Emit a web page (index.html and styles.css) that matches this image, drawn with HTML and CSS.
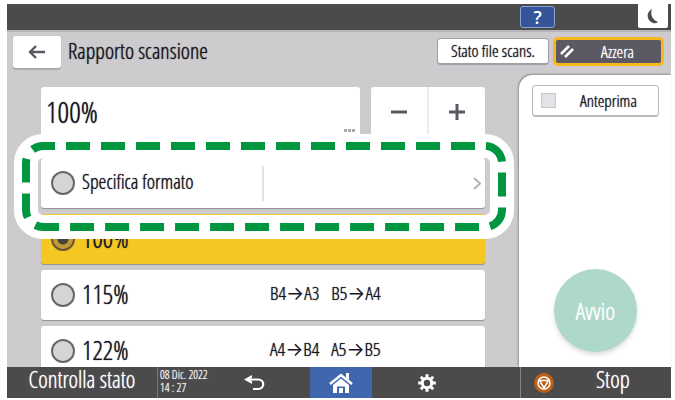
FILE: index.html
```html
<!DOCTYPE html>
<html lang="it">
<head>
<meta charset="utf-8">
<title>Rapporto scansione</title>
<link rel="stylesheet" href="styles.css">
</head>
<body>
<div class="screen">
  <div class="topbar">
    <button class="help" aria-label="Guida">?</button>
    <button class="sleep" aria-label="Risparmio energia"><svg width="12" height="16" viewBox="0 0 12 16"><path d="M5 1C-1 4-1 12 6 15q3 1 5-1C5 12 3 6 5 1z" fill="#4b4b4c"/></svg></button>
  </div>
  <header class="header">
    <button class="back" aria-label="Indietro"><svg width="18" height="14" viewBox="0 0 18 14"><path d="M17 7H2M8 1L2 7l6 6" fill="none" stroke="#5b5963" stroke-width="2.400"/></svg></button>
    <h1 class="title">Rapporto scansione</h1>
    <button class="status-button">Stato file scans.</button>
    <button class="reset-button"><svg width="14" height="13" viewBox="0 0 14 13"><path d="M1 9L9 1M5 12l8-8" stroke="#fff" stroke-width="2.600"/></svg><span>Azzera</span></button>
  </header>
  <div class="content">
    <main class="main">
      <div class="entry-row">
        <div class="entry"><input class="value" type="text" value="100%" aria-label="Rapporto"><svg class="dots" width="11" height="3" viewBox="0 0 11 3"><path d="M0 0h3v3H0zM4 0h3v3H4zM8 0h3v3H8z" fill="#aaa9ad"/></svg></div>
        <div class="stepper">
          <button aria-label="Riduci"><svg width="16" height="16" viewBox="0 0 16 16"><path d="M0 8h16" stroke="#5b5963" stroke-width="3"/></svg></button>
          <button aria-label="Aumenta"><svg width="16" height="16" viewBox="0 0 16 16"><path d="M0 8h16M8 0v16" stroke="#5b5963" stroke-width="3"/></svg></button>
        </div>
      </div>
      <div class="options">
        <div class="featured">
          <label class="option"><input type="radio" name="ratio"><span class="format">Specifica formato</span><span class="format-value"><svg width="8" height="13" viewBox="0 0 8 13"><path d="M1 1l6 5.500-6 5.500" fill="none" stroke="#b5b4b9" stroke-width="2"/></svg></span></label>
          <svg class="highlight" aria-hidden="true"><rect class="halo" x="12" y="12" rx="17"/><rect class="dashes" x="12" y="12" rx="17"/></svg>
        </div>
        <label class="option selected"><input type="radio" name="ratio" checked><span class="ratio">100%</span></label>
        <label class="option"><input type="radio" name="ratio"><span class="ratio">115%</span><span class="sizes"><span>B4<span class="arrow">→</span>A3</span><span>B5<span class="arrow">→</span>A4</span></span></label>
        <label class="option"><input type="radio" name="ratio"><span class="ratio">122%</span><span class="sizes"><span>A4<span class="arrow">→</span>B4</span><span>A5<span class="arrow">→</span>B5</span></span></label>
      </div>
    </main>
    <aside class="side">
      <label class="preview"><input type="checkbox"><span>Anteprima</span></label>
      <button class="start">Avvio</button>
    </aside>
  </div>
  <footer class="footer">
    <button class="check">Controlla stato</button>
    <div class="clock-area">
      <div class="clock"><span>08 Dic. 2022</span><span>14 : 27</span></div>
      <button aria-label="Annulla"><svg width="22" height="17" viewBox="0 0 22 17"><path d="M9 1v9L1 5.500z" fill="#fff"/><path d="M9 3.800v3L6 5.500z" fill="#4b4b4c"/><path d="M3 5.500h12c7 0 7 9.500 0 9.500h-5" fill="none" stroke="#fff" stroke-width="2.200"/></svg></button>
    </div>
    <button class="home" aria-label="Home"><svg width="24" height="20" viewBox="0 0 24 20"><path d="M1 11L12 2l11 9" fill="none" stroke="#fff" stroke-width="2.500"/><path d="M17 0h3v7l-3-2.500zM4 12L12 5.500l8 6.500V20h-4v-6.500H8V20H4zM10 15h4v5h-4z" fill="#fff"/></svg></button>
    <div class="gear-area"><button aria-label="Impostazioni"><svg width="18" height="18" viewBox="-9 -9 18 18"><circle r="4.700" fill="none" stroke="#fff" stroke-width="3"/><path d="M0-8.800v3.500M0 8.800V5.300M-8.800 0h3.500M8.800 0H5.300M-6.200-6.200l2.400 2.400M6.200-6.200L3.800-3.800M-6.200 6.200l2.400-2.400M6.200 6.200L3.800 3.800" stroke="#fff" stroke-width="3"/></svg></button></div>
    <button class="stop"><svg width="20" height="20" viewBox="0 0 20 20"><circle cx="10" cy="10" r="10" fill="#b9611c"/><circle cx="10" cy="10" r="6" fill="none" stroke="#fff" stroke-width="1.500"/><path d="M5.500 7.500h9L10 15z" fill="none" stroke="#fff" stroke-width="1.500"/></svg><span>Stop</span></button>
  </footer>
</div>
</body>
</html>
```
FILE: styles.css
```css
* { box-sizing: border-box; }
body {
  margin: 0;
  background: #fff;
  color: #17151f;
  font-family: "Open Sans Condensed Light", "Open Sans Condensed", "Liberation Sans Narrow", "Liberation Sans", sans-serif;
  font-weight: 300;
  text-shadow: 0 0 1px currentColor;
}
button, input { font: inherit; color: inherit; text-shadow: inherit; margin: 0; padding: 0; border: 0; background: none; }
svg { display: block; flex: none; }
.screen { display: flex; flex-direction: column; height: 100vh; padding: 4px 4px 2px 7px; }
.topbar { display: flex; flex: none; align-items: flex-start; justify-content: flex-end; gap: 83px; height: 26px; padding-right: 3px; background: #4b4b4c; }
.help { width: 35px; height: 22px; margin-top: 2px; border: 1px solid #8fa3cf; border-radius: 3px; background: #365499; color: #fff; font: 600 18px/18px "Open Sans", sans-serif; text-shadow: none; }
.sleep { display: grid; place-items: center; width: 30px; height: 24px; border-radius: 0 0 2px 2px; background: #fff; }
.header { display: flex; flex: none; align-items: center; height: 45px; padding: 0 7px 4px 6px; background: #cdcbce; border-top: 2px solid #b5b4b8; }
.back { display: grid; place-items: center; width: 48px; height: 32px; border-radius: 3px; background: #fff; box-shadow: 0 2px 1px #aaa9ad; }
.title { flex: 1; margin: 0 0 0 7px; padding-bottom: 4px; font-size: 22px; line-height: 28px; font-weight: 300; }
.status-button { width: 112px; height: 27px; border: 1px solid #a09fa3; border-bottom-width: 2px; border-radius: 4px; background: #fff; font-size: 17px; line-height: 24px; white-space: nowrap; }
.reset-button { display: flex; align-items: center; width: 111px; height: 29px; margin-left: 4px; padding-left: 4px; border: 3px solid #f8b81c; border-radius: 5px; background: #5b5963; color: #fff; font-size: 17px; line-height: 20px; }
.reset-button span { flex: 1; }
.content { display: flex; flex: 1; min-height: 0; background: #cdcbce; }
.main { flex: 1; min-width: 0; padding: 12px 34px 0; overflow: hidden; }
.entry-row { display: flex; gap: 11px; height: 50px; }
.entry { display: flex; flex: 1; align-items: center; min-width: 0; padding: 0 5px; border-radius: 3px; background: #fff; }
.value { flex: 1; min-width: 0; font-size: 29px; line-height: 36px; }
.dots { align-self: flex-end; margin-bottom: 5px; }
.stepper { display: flex; width: 114px; border-radius: 3px; background: #fff; }
.stepper button { display: grid; flex: 1; place-items: center; }
.stepper button + button { border-left: 2px solid #ebeaec; }
.options { display: flex; flex-direction: column; gap: 6px; margin-top: 21px; }
.featured { position: relative; }
.option { display: flex; align-items: center; height: 50px; padding-left: 10px; border-radius: 3px; background: #fff; box-shadow: 0 1px 1px #929196; }
.option input { flex: none; appearance: none; width: 24px; height: 24px; border: 2px solid #67666c; border-radius: 50%; background: #d6d5d6; }
.selected { background: #f4c722; }
.selected input { border-color: #675636; background: radial-gradient(circle, #45413d 0 5px, #c09b35 6px); }
.format { width: 187px; padding: 0 0 2px 7px; font-size: 20px; line-height: 24px; }
.format-value { display: flex; flex: 1; align-items: center; justify-content: flex-end; height: 35px; padding-right: 4px; border-left: 2px solid #e3e2e7; }
.ratio { width: 195px; padding: 0 0 2px 7px; font-size: 26px; line-height: 28px; }
.sizes { display: flex; gap: 12px; padding-bottom: 4px; font-size: 19px; line-height: 24px; }
.arrow { font-family: Inter, sans-serif; font-weight: 400; text-shadow: none; }
.highlight { position: absolute; top: -24px; left: -27px; width: calc(100% + 56px); height: calc(100% + 55px); pointer-events: none; }
.highlight rect { width: calc(100% - 24px); height: calc(100% - 24px); fill: none; }
.halo { stroke: #fff; stroke-width: 24px; }
.dashes { stroke: #009640; stroke-width: 8px; stroke-dasharray: 24 11; stroke-dashoffset: 12; }
.side { display: flex; flex: none; flex-direction: column; align-items: center; justify-content: space-between; width: 152px; padding: 10px 12px 15px 13px; border-radius: 14px 0 0 0; background: #fff; box-shadow: -1px -1px 2px #929196; }
.preview { display: flex; align-items: center; width: 100%; height: 32px; padding-left: 8px; border: 1px solid #bbb9c2; border-bottom-width: 2px; border-radius: 4px; font-size: 17px; line-height: 24px; }
.preview input { appearance: none; width: 15px; height: 15px; border: 1px solid #c6c5c8; background: #e4e2e8; }
.preview span { padding-left: 24px; }
.start { width: 83px; height: 83px; border-radius: 50%; background: #aed8ca; color: #fff; font-size: 24px; line-height: 28px; box-shadow: 0 3px 4px #dedde3; }
.footer { display: grid; flex: none; grid-template-columns: 150px 153px 62px 1fr 151px; height: 31px; background: #4b4b4c; color: #fff; }
.check { padding-bottom: 6px; font-size: 23px; line-height: 25px; white-space: nowrap; }
.clock-area { display: flex; align-items: center; border-left: 1px solid #77767a; }
.clock { display: flex; flex-direction: column; width: 85px; padding: 0 0 3px 2px; font-size: 12px; line-height: 13px; white-space: nowrap; }
.home { display: grid; place-items: center; background: #4066ae; }
.gear-area { display: flex; align-items: center; padding-left: 46px; }
.stop { display: flex; align-items: center; padding-left: 13px; border-left: 1px solid #85848a; font-size: 23px; line-height: 25px; }
.stop span { padding: 0 0 6px 42px; }
```
